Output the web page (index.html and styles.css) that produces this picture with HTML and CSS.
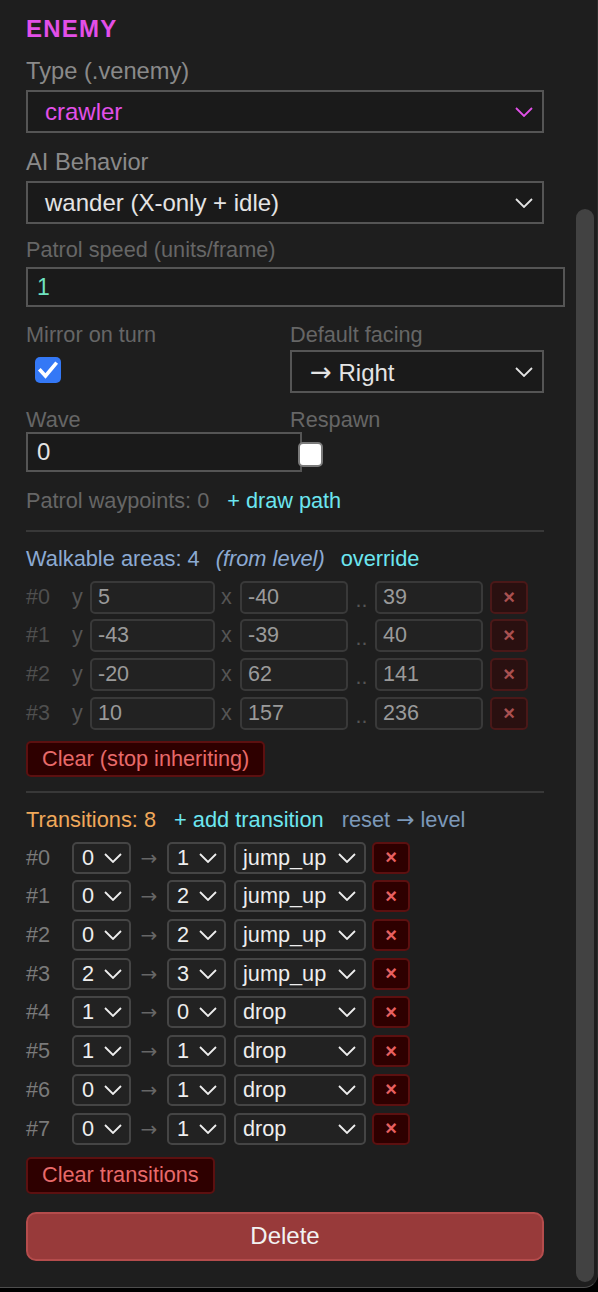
FILE: index.html
```html
<!DOCTYPE html>
<html lang="en">
<head>
<meta charset="utf-8">
<title>Enemy inspector</title>
<link rel="stylesheet" href="styles.css">
</head>
<body>
<div class="panel">
  <div class="content">
    <h2 class="title">ENEMY</h2>

    <div class="label main lbl-type">Type (.venemy)</div>
    <div class="select sel-first magenta">
      <span>crawler</span>
      <svg class="chev" viewBox="0 0 18 10"><polyline points="1,1 9,9 17,1"/></svg>
    </div>

    <div class="label main lbl-ai">AI Behavior</div>
    <div class="select sel-ai">
      <span>wander (X-only + idle)</span>
      <svg class="chev" viewBox="0 0 18 10"><polyline points="1,1 9,9 17,1"/></svg>
    </div>

    <div class="label dim lbl-speed">Patrol speed (units/frame)</div>
    <div class="input input-wide mint">1</div>

    <div class="pair pair-mirror">
      <div class="label dim">Mirror on turn</div>
      <div class="label dim">Default facing</div>
      <svg class="check" viewBox="0 0 26 26"><rect x="0" y="0" width="26" height="26" rx="5"/><polyline points="5.5,13.5 10.5,19 20.5,7"/></svg>
      <div class="select sel-facing">
        <span><span class="arrow-glyph big">→</span> Right</span>
        <svg class="chev" viewBox="0 0 18 10"><polyline points="1,1 9,9 17,1"/></svg>
      </div>
    </div>

    <div class="pair pair-wave">
      <div class="label dim">Wave</div>
      <div class="label dim">Respawn</div>
      <div class="input input-wave">0</div>
      <div class="box"></div>
    </div>

    <div class="meta">
      <span>Patrol waypoints: 0</span>
      <span class="link">+ draw path</span>
    </div>

    <div class="sep sep-1"></div>

    <div class="head head-walk">
      <span class="steel">Walkable areas: 4</span>
      <span class="steel italic">(from level)</span>
      <span class="link-plain">override</span>
    </div>

    <div class="wrows">
      <div class="wrow">
        <span class="widx">#0</span><span class="axis">y</span><span class="num num-y">5</span>
        <span class="axis axis-x">x</span><span class="num">-40</span>
        <span class="dots">..</span><span class="num">39</span>
        <span class="wdel">×</span>
      </div>
      <div class="wrow">
        <span class="widx">#1</span><span class="axis">y</span><span class="num num-y">-43</span>
        <span class="axis axis-x">x</span><span class="num">-39</span>
        <span class="dots">..</span><span class="num">40</span>
        <span class="wdel">×</span>
      </div>
      <div class="wrow">
        <span class="widx">#2</span><span class="axis">y</span><span class="num num-y">-20</span>
        <span class="axis axis-x">x</span><span class="num">62</span>
        <span class="dots">..</span><span class="num">141</span>
        <span class="wdel">×</span>
      </div>
      <div class="wrow">
        <span class="widx">#3</span><span class="axis">y</span><span class="num num-y">10</span>
        <span class="axis axis-x">x</span><span class="num">157</span>
        <span class="dots">..</span><span class="num">236</span>
        <span class="wdel">×</span>
      </div>
    </div>

    <div class="btn-clear clear-walk">Clear (stop inheriting)</div>

    <div class="sep sep-2"></div>

    <div class="head head-trans">
      <span class="orange">Transitions: 8</span>
      <span class="link-plain">+ add transition</span>
      <span class="muted-blue">reset <span class="arrow-glyph">→</span> level</span>
    </div>

    <div class="trows">
      <div class="trow">
        <span class="tidx">#0</span>
        <span class="tsel"><span>0</span><svg class="chev" viewBox="0 0 18 10"><polyline points="1,1 9,9 17,1"/></svg></span>
        <span class="arrow">→</span>
        <span class="tsel"><span>1</span><svg class="chev" viewBox="0 0 18 10"><polyline points="1,1 9,9 17,1"/></svg></span>
        <span class="tsel tsel-kind"><span>jump_up</span><svg class="chev" viewBox="0 0 18 10"><polyline points="1,1 9,9 17,1"/></svg></span>
        <span class="tdel">×</span>
      </div>
      <div class="trow">
        <span class="tidx">#1</span>
        <span class="tsel"><span>0</span><svg class="chev" viewBox="0 0 18 10"><polyline points="1,1 9,9 17,1"/></svg></span>
        <span class="arrow">→</span>
        <span class="tsel"><span>2</span><svg class="chev" viewBox="0 0 18 10"><polyline points="1,1 9,9 17,1"/></svg></span>
        <span class="tsel tsel-kind"><span>jump_up</span><svg class="chev" viewBox="0 0 18 10"><polyline points="1,1 9,9 17,1"/></svg></span>
        <span class="tdel">×</span>
      </div>
      <div class="trow">
        <span class="tidx">#2</span>
        <span class="tsel"><span>0</span><svg class="chev" viewBox="0 0 18 10"><polyline points="1,1 9,9 17,1"/></svg></span>
        <span class="arrow">→</span>
        <span class="tsel"><span>2</span><svg class="chev" viewBox="0 0 18 10"><polyline points="1,1 9,9 17,1"/></svg></span>
        <span class="tsel tsel-kind"><span>jump_up</span><svg class="chev" viewBox="0 0 18 10"><polyline points="1,1 9,9 17,1"/></svg></span>
        <span class="tdel">×</span>
      </div>
      <div class="trow">
        <span class="tidx">#3</span>
        <span class="tsel"><span>2</span><svg class="chev" viewBox="0 0 18 10"><polyline points="1,1 9,9 17,1"/></svg></span>
        <span class="arrow">→</span>
        <span class="tsel"><span>3</span><svg class="chev" viewBox="0 0 18 10"><polyline points="1,1 9,9 17,1"/></svg></span>
        <span class="tsel tsel-kind"><span>jump_up</span><svg class="chev" viewBox="0 0 18 10"><polyline points="1,1 9,9 17,1"/></svg></span>
        <span class="tdel">×</span>
      </div>
      <div class="trow">
        <span class="tidx">#4</span>
        <span class="tsel"><span>1</span><svg class="chev" viewBox="0 0 18 10"><polyline points="1,1 9,9 17,1"/></svg></span>
        <span class="arrow">→</span>
        <span class="tsel"><span>0</span><svg class="chev" viewBox="0 0 18 10"><polyline points="1,1 9,9 17,1"/></svg></span>
        <span class="tsel tsel-kind"><span>drop</span><svg class="chev" viewBox="0 0 18 10"><polyline points="1,1 9,9 17,1"/></svg></span>
        <span class="tdel">×</span>
      </div>
      <div class="trow">
        <span class="tidx">#5</span>
        <span class="tsel"><span>1</span><svg class="chev" viewBox="0 0 18 10"><polyline points="1,1 9,9 17,1"/></svg></span>
        <span class="arrow">→</span>
        <span class="tsel"><span>1</span><svg class="chev" viewBox="0 0 18 10"><polyline points="1,1 9,9 17,1"/></svg></span>
        <span class="tsel tsel-kind"><span>drop</span><svg class="chev" viewBox="0 0 18 10"><polyline points="1,1 9,9 17,1"/></svg></span>
        <span class="tdel">×</span>
      </div>
      <div class="trow">
        <span class="tidx">#6</span>
        <span class="tsel"><span>0</span><svg class="chev" viewBox="0 0 18 10"><polyline points="1,1 9,9 17,1"/></svg></span>
        <span class="arrow">→</span>
        <span class="tsel"><span>1</span><svg class="chev" viewBox="0 0 18 10"><polyline points="1,1 9,9 17,1"/></svg></span>
        <span class="tsel tsel-kind"><span>drop</span><svg class="chev" viewBox="0 0 18 10"><polyline points="1,1 9,9 17,1"/></svg></span>
        <span class="tdel">×</span>
      </div>
      <div class="trow">
        <span class="tidx">#7</span>
        <span class="tsel"><span>0</span><svg class="chev" viewBox="0 0 18 10"><polyline points="1,1 9,9 17,1"/></svg></span>
        <span class="arrow">→</span>
        <span class="tsel"><span>1</span><svg class="chev" viewBox="0 0 18 10"><polyline points="1,1 9,9 17,1"/></svg></span>
        <span class="tsel tsel-kind"><span>drop</span><svg class="chev" viewBox="0 0 18 10"><polyline points="1,1 9,9 17,1"/></svg></span>
        <span class="tdel">×</span>
      </div>
    </div>

    <div class="btn-clear clear-trans">Clear transitions</div>

    <div class="btn-delete">Delete</div>
  </div>
  <div class="scrollbar"><div class="thumb"></div></div>
</div>
</body>
</html>
```

FILE: styles.css
```css
html, body {
  margin: 0;
  padding: 0;
  background: #000;
}

body {
  font-family: "Liberation Sans", Arial, Helvetica, sans-serif;
}

.panel {
  display: flex;
  width: 598px;
  height: 1288px;
  box-sizing: border-box;
  background: #1e1e1e;
  border-bottom: 1px solid #4d4d4d;
  border-right: 1px solid #2c2c2c;
  border-bottom-right-radius: 14px;
  overflow: hidden;
}

.content {
  width: 565px;
  flex: none;
  box-sizing: border-box;
  padding: 15px 0 0 26px;
  display: flex;
  flex-direction: column;
  align-items: flex-start;
}

.scrollbar {
  width: 18px;
  margin-left: 11px;
  flex: none;
}

.thumb {
  margin-top: 209px;
  height: 1073px;
  border-radius: 9px;
  background: #424242;
}

.title {
  margin: 0;
  font-size: 24px;
  line-height: 28px;
  font-weight: 700;
  letter-spacing: 1.2px;
  color: #e34fe8;
}

.label {
  font-size: 21.7px;
  line-height: 24px;
  color: #8a8a8a;
  white-space: nowrap;
}

.label.main {
  font-size: 23.7px;
}

.label.dim {
  color: #666;
}

.lbl-type { margin-top: 16px; }
.lbl-ai { margin-top: 17px; }
.lbl-speed { margin-top: 14px; }

.select {
  box-sizing: border-box;
  display: flex;
  align-items: center;
  justify-content: space-between;
  width: 518px;
  height: 43px;
  margin-top: 7px;
  padding: 0 9px 0 17px;
  border: 2px solid #555;
  background: #1a1a1a;
  color: #e4e4e4;
  font-size: 24px;
  white-space: nowrap;
}

.select.magenta {
  color: #e250e8;
}

.arrow-glyph {
  font-family: "DejaVu Sans", sans-serif;
}

.arrow-glyph.big {
  font-size: 26px;
  margin-left: 1px;
}

.chev {
  width: 18px;
  height: 10px;
  flex: none;
  fill: none;
  stroke: currentColor;
  stroke-width: 1.8;
}

.input {
  box-sizing: border-box;
  display: flex;
  align-items: center;
  height: 40px;
  padding-left: 9px;
  border: 2px solid #555;
  background: #1a1a1a;
  color: #e4e4e4;
  font-size: 23px;
}

.input-wide {
  width: 539px;
  margin-top: 5px;
}

.mint {
  color: #6fe3c0;
}

.pair {
  display: grid;
  grid-template-columns: 264px 254px;
  align-items: start;
}

.pair-mirror { margin-top: 16px; }
.pair-wave { margin-top: 15px; }

.check {
  width: 26px;
  height: 26px;
  margin: 10px 0 0 9px;
}

.check rect {
  fill: #3478f6;
}

.check polyline {
  fill: none;
  stroke: #fff;
  stroke-width: 3.6;
  stroke-linecap: square;
}

.sel-facing {
  width: 254px;
  margin-top: 3px;
}

.input-wave {
  width: 276px;
  margin-top: 0;
  padding-left: 9px;
  font-size: 24px;
}

.box {
  box-sizing: border-box;
  width: 25px;
  height: 25px;
  margin: 10px 0 0 8px;
  border: 2px solid #7a7a7a;
  border-radius: 5px;
  background: #fff;
}

.meta {
  display: flex;
  margin-top: 17px;
  font-size: 21.7px;
  line-height: 24px;
  color: #666;
  white-space: nowrap;
}

.link {
  margin-left: 18px;
  color: #6ce6f0;
}

.link-plain {
  color: #6ce6f0;
}

.sep {
  width: 518px;
  height: 2px;
  background: #383838;
}

.sep-1 { margin-top: 17px; }
.sep-2 { margin-top: 14px; }

.head {
  display: flex;
  font-size: 21.8px;
  line-height: 24px;
  white-space: nowrap;
}

.head-walk {
  gap: 16px;
  margin-top: 14.7px;
}

.head-trans {
  gap: 18px;
  margin-top: 15.7px;
}

.steel { color: #8caad2; }
.italic { font-style: italic; }
.orange { color: #f0a85a; }
.muted-blue { color: #7c98b8; }

.wrows {
  display: flex;
  flex-direction: column;
  gap: 5.7px;
  margin-top: 10px;
}

.wrow {
  display: flex;
  align-items: center;
  gap: 6px;
  height: 33px;
  font-size: 21.5px;
}

.widx {
  width: 40px;
  color: #4f4f4f;
}

.axis {
  width: 12px;
  color: #555;
}

.axis-x {
  width: 13px;
}

.dots {
  width: 15px;
  color: #555;
  text-align: center;
  padding-top: 6px;
}

.num {
  box-sizing: border-box;
  display: flex;
  align-items: center;
  width: 108px;
  height: 33px;
  padding-left: 6px;
  border: 2px solid #393939;
  border-radius: 5px;
  background: #222;
  color: #9a9a9a;
}

.num-y {
  width: 125px;
}

.wdel {
  box-sizing: border-box;
  display: flex;
  align-items: center;
  justify-content: center;
  width: 38px;
  height: 33px;
  margin-left: 1px;
  border: 2px solid #4a1818;
  border-radius: 5px;
  background: #2a1010;
  color: #aa5050;
  font-size: 20px;
  font-weight: 700;
}

.btn-clear {
  box-sizing: border-box;
  display: flex;
  align-items: center;
  height: 36px;
  padding: 0 14px;
  border: 2px solid #5c1010;
  border-radius: 5px;
  background: #2e0000;
  color: #e86a6a;
  font-size: 21.7px;
  white-space: nowrap;
}

.clear-walk { margin-top: 11px; }
.clear-trans { margin-top: 12px; height: 37px; }

.trows {
  display: flex;
  flex-direction: column;
  gap: 6.7px;
  margin-top: 9.3px;
}

.trow {
  display: flex;
  align-items: center;
  gap: 8px;
  height: 32px;
  font-size: 21.7px;
}

.tidx {
  width: 38px;
  color: #7a7a7a;
}

.tsel {
  box-sizing: border-box;
  display: flex;
  align-items: center;
  justify-content: space-between;
  width: 59px;
  height: 32px;
  padding: 0 7px 0 8px;
  border: 2px solid #454545;
  border-radius: 5px;
  background: #222;
  color: #eee;
}

.tsel-kind {
  width: 132px;
  padding: 0 8px 0 7px;
}

.arrow {
  width: 20px;
  text-align: center;
  color: #666;
  font-family: "DejaVu Sans", sans-serif;
  font-size: 20px;
}

.tdel {
  box-sizing: border-box;
  display: flex;
  align-items: center;
  justify-content: center;
  width: 38px;
  height: 32px;
  margin-left: -2px;
  border: 2px solid #5c1010;
  border-radius: 5px;
  background: #2e0000;
  color: #e86060;
  font-size: 20px;
  font-weight: 700;
}

.btn-delete {
  box-sizing: border-box;
  display: flex;
  align-items: center;
  justify-content: center;
  width: 518px;
  height: 49px;
  margin-top: 18px;
  border: 2px solid #b44c4c;
  border-radius: 10px;
  background: #983a3a;
  color: #f2f2f2;
  font-size: 24px;
}
```
